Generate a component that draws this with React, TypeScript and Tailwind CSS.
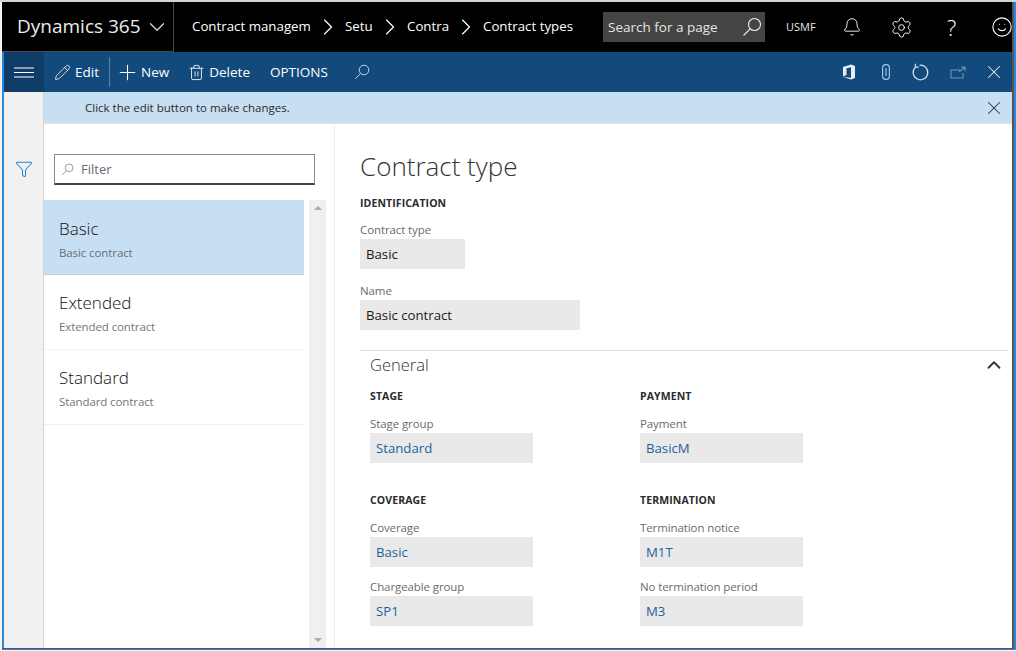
import React from "react";
import { Bell, ChevronDown, ChevronRight, ChevronUp, Pencil, Plus, Settings, Smile, Trash2, X, Filter } from "lucide-react";

const SearchIcon = ({ size = 20, color = "#fff" }: { size?: number; color?: string }) => (
  <svg width={size} height={size} viewBox="0 0 20 20" fill="none" stroke={color} strokeWidth="1.1">
    <circle cx="12.5" cy="7.5" r="6" />
    <path d="M8.2 11.8 1.5 18.5" />
  </svg>
);

const Crumb = ({ text, width }: { text: string; width: string }) => (
  <span className={`${width} shrink-0 whitespace-nowrap text-[13.3px] text-white`}>{text}</span>
);

const CrumbArrow = () => <ChevronRight className="mx-[3px] shrink-0" size={28} color="#fff" strokeWidth={1} />;

const Field = ({ label, value, width, link }: { label: string; value: string; width: string; link?: boolean }) => (
  <div>
    <div className="h-[19px] text-[11.5px] leading-[19px] tracking-[-0.1px] text-[#6b6b6b]">{label}</div>
    <div className={`${width} h-[30px] bg-[#e9e9e9] pl-[6px] text-[13.2px] leading-[31px] ${link ? "text-[#1f5f9e]" : "text-[#1a1a1a]"}`}>{value}</div>
  </div>
);

const SectionLabel = ({ text }: { text: string }) => (
  <div className="h-[16px] text-[10.5px] font-bold leading-[16px] tracking-[0.1px] text-[#2b2b2b]">{text}</div>
);

const ListItem = ({ title, sub, active }: { title: string; sub: string; active?: boolean }) => (
  <div className={`h-[75px] border-b pl-[15px] ${active ? "border-[#bcd3e6] bg-[#c7dff3] pt-[16px]" : "border-[#f2f2f2] pt-[15px]"}`}>
    <div className="h-[26px] text-[17px] font-light leading-[26px] text-[#111]">{title}</div>
    <div className={`mt-[2px] text-[11.5px] leading-[18px] tracking-[-0.1px] ${active ? "text-[#6a6f73]" : "text-[#767676]"}`}>{sub}</div>
  </div>
);

export default function App() {
  return (
    <div className="h-[651px] w-[1016px] overflow-hidden border-t-2 border-[#d4d4d4] bg-[#f4f4f4] pb-[1px] pl-[2px] font-['Open_Sans','Noto_Sans',sans-serif]">
      <div className="h-full border-r-2 border-b border-[#2b88d8]">
        <div className="flex h-full flex-col border-r-2 border-b border-[#555]">
          {/* top nav */}
          <div className="flex h-[50px] shrink-0 items-center overflow-hidden bg-black">
            <div className="flex h-full w-[172px] shrink-0 items-center border-r border-b border-[#4a4a4a] pl-[15px]">
              <span className="text-[19px] text-[#ececec]">Dynamics 365</span>
              <ChevronDown className="ml-[3px]" size={26} color="#ddd" strokeWidth={1.1} />
            </div>
            <div className="ml-[18px] flex items-center">
              <Crumb text="Contract managem" width="w-[119px]" />
              <CrumbArrow />
              <Crumb text="Setu" width="w-[28px]" />
              <CrumbArrow />
              <Crumb text="Contra" width="w-[42px]" />
              <CrumbArrow />
              <Crumb text="Contract types" width="w-[92px]" />
            </div>
            <div className="ml-[28px] flex h-[30px] w-[162px] shrink-0 items-center justify-between bg-[#444444] pl-[5px] pr-[3px]">
              <span className="text-[13.5px] text-[#e4e4e4]">Search for a page</span>
              <SearchIcon size={20} color="#eee" />
            </div>
            <span className="ml-[21px] w-[31px] shrink-0 text-[11px] font-medium text-[#e8e8e8]">USMF</span>
            <Bell className="ml-[25px] shrink-0" size={20} color="#fff" strokeWidth={1.1} />
            <Settings className="ml-[28px] shrink-0" size={23} color="#fff" strokeWidth={1} />
            <span className="ml-[34px] shrink-0 text-[22px] font-light text-white">?</span>
            <Smile className="ml-[35px] shrink-0" size={22} color="#fff" strokeWidth={1.2} />
          </div>
          <div className="flex min-h-0 flex-1 flex-col border-l-2 border-[#2b88d8]">
            {/* command bar */}
            <div className="flex h-[40px] shrink-0 items-center bg-[#134a7c] text-[13.5px] text-white">
              <div className="flex h-full w-[40px] items-center justify-center bg-[#0f3d68]">
                <svg width="20" height="11" viewBox="0 0 20 11" stroke="#fff" strokeWidth="1.2">
                  <path d="M0 1h20M0 5.5h20M0 10h20" />
                </svg>
              </div>
              <Pencil className="ml-[10px]" size={17} color="#fff" strokeWidth={1.1} />
              <span className="ml-[4px]">Edit</span>
              <div className="ml-[10px] h-[30px] w-px bg-[#5c83a8]" />
              <Plus className="ml-[5px]" size={25} color="#fff" strokeWidth={1} />
              <span className="ml-[1px]">New</span>
              <Trash2 className="ml-[19px]" size={17} color="#fff" strokeWidth={1.2} />
              <span className="ml-[4px]">Delete</span>
              <span className="ml-[20px]">OPTIONS</span>
              <span className="ml-[26px]"><SearchIcon size={16} color="#d5e3ef" /></span>
              <div className="ml-auto flex items-center pr-[7px]">
                <svg width="14" height="16" viewBox="0 0 14 16" fill="#e6eef5">
                  <path d="M1 3 9 .5 13 2v12l-4 1.5L1 13l8 .8V3.2L4.5 4.2V11L1 12.5z" />
                </svg>
                <svg className="ml-[26px]" width="8" height="16" viewBox="0 0 8 16" fill="none" stroke="#9ec5ea" strokeWidth="1.2">
                  <rect x="0.6" y="0.6" width="6.8" height="14.8" rx="3.4" />
                  <path d="M4 4v8" />
                </svg>
                <svg className="ml-[21px]" width="20" height="20" viewBox="0 0 20 20" fill="none" stroke="#cfe0ee" strokeWidth="1.2">
                  <path d="M8.5 3.2A7.3 7.3 0 1 1 4.6 5" />
                  <path d="M4.4 1.8v3.4h3.4" />
                </svg>
                <svg className="ml-[19px]" width="16" height="13" viewBox="0 0 16 13" fill="none" stroke="#6f93b3" strokeWidth="1.1">
                  <path d="M10 4H1v8h12V7M9 6l6-5M11 1h4v4" />
                </svg>
                <X className="ml-[17px]" size={22} color="#dfe9f2" strokeWidth={1.1} />
              </div>
            </div>
            <div className="flex min-h-0 flex-1">
              {/* filter rail */}
              <div className="flex w-[40px] shrink-0 justify-center border-r border-[#d4d4d4] bg-[#f1f1f1] pt-[68px]">
                <Filter size={18} color="#2b88d8" strokeWidth={1.4} />
              </div>
              <div className="flex min-w-0 flex-1 flex-col bg-white">
                <div className="flex h-[32px] shrink-0 items-center justify-between border-b border-[#dde4ea] bg-[#c7dff3] pl-[41px] pr-[7px] text-[11.5px] text-[#2b2b2b]">
                  <span>Click the edit button to make changes.</span>
                  <X size={22} color="#333" strokeWidth={1.1} />
                </div>
                <div className="flex min-h-0 flex-1">
                  {/* list pane */}
                  <div className="flex w-[291px] shrink-0 flex-col border-r border-[#efefef]">
                    <div className="pl-[10px] pt-[30px]">
                      <div className="flex h-[31px] w-[261px] items-center gap-[7px] border border-b-2 border-[#8a8a8a] border-b-[#444] pl-[6px]">
                        <SearchIcon size={13} color="#777" />
                        <span className="pt-[2px] text-[13px] text-[#6b6b6b]">Filter</span>
                      </div>
                    </div>
                    <div className="mt-[15px] flex min-h-0 flex-1 items-stretch">
                      <div className="w-[260px] shrink-0">
                        <ListItem title="Basic" sub="Basic contract" active />
                        <ListItem title="Extended" sub="Extended contract" />
                        <ListItem title="Standard" sub="Standard contract" />
                      </div>
                      <div className="ml-[5px] flex w-[17px] flex-col items-center justify-between bg-[#f0f0f0] py-[6px]">
                        <div className="h-0 w-0 border-x-[4px] border-b-[4px] border-x-transparent border-b-[#aaa]" />
                        <div className="h-0 w-0 border-x-[4px] border-t-[4px] border-x-transparent border-t-[#aaa]" />
                      </div>
                    </div>
                  </div>
                  {/* details pane */}
                  <div className="min-w-0 flex-1 pl-[25px] pr-[4px] pt-[24px]">
                    <h1 className="h-[40px] text-[26px] font-light leading-[36px] text-[#333]">Contract type</h1>
                    <div className="mt-[7px]"><SectionLabel text="IDENTIFICATION" /></div>
                    <div className="mt-[9px]"><Field label="Contract type" value="Basic" width="w-[105px]" /></div>
                    <div className="mt-[12px]"><Field label="Name" value="Basic contract" width="w-[220px]" /></div>
                    <div className="mt-[20px] border-t border-[#dedede] pl-[10px]">
                      <div className="flex h-[28px] items-center justify-between pr-[3px]">
                        <span className="text-[16.5px] font-light text-[#333]">General</span>
                        <ChevronUp size={22} color="#333" strokeWidth={2} />
                      </div>
                      <div className="mt-[9px] grid w-[443px] grid-cols-[270px_173px]">
                        <div>
                          <SectionLabel text="STAGE" />
                          <div className="mt-[10px]"><Field label="Stage group" value="Standard" width="w-[163px]" link /></div>
                          <div className="mt-[29px]"><SectionLabel text="COVERAGE" /></div>
                          <div className="mt-[10px]"><Field label="Coverage" value="Basic" width="w-[163px]" link /></div>
                          <div className="mt-[10px]"><Field label="Chargeable group" value="SP1" width="w-[163px]" link /></div>
                        </div>
                        <div>
                          <SectionLabel text="PAYMENT" />
                          <div className="mt-[10px]"><Field label="Payment" value="BasicM" width="w-[163px]" link /></div>
                          <div className="mt-[29px]"><SectionLabel text="TERMINATION" /></div>
                          <div className="mt-[10px]"><Field label="Termination notice" value="M1T" width="w-[163px]" link /></div>
                          <div className="mt-[10px]"><Field label="No termination period" value="M3" width="w-[163px]" link /></div>
                        </div>
                      </div>
                    </div>
                  </div>
                </div>
              </div>
            </div>
          </div>
        </div>
      </div>
    </div>
  );
}
